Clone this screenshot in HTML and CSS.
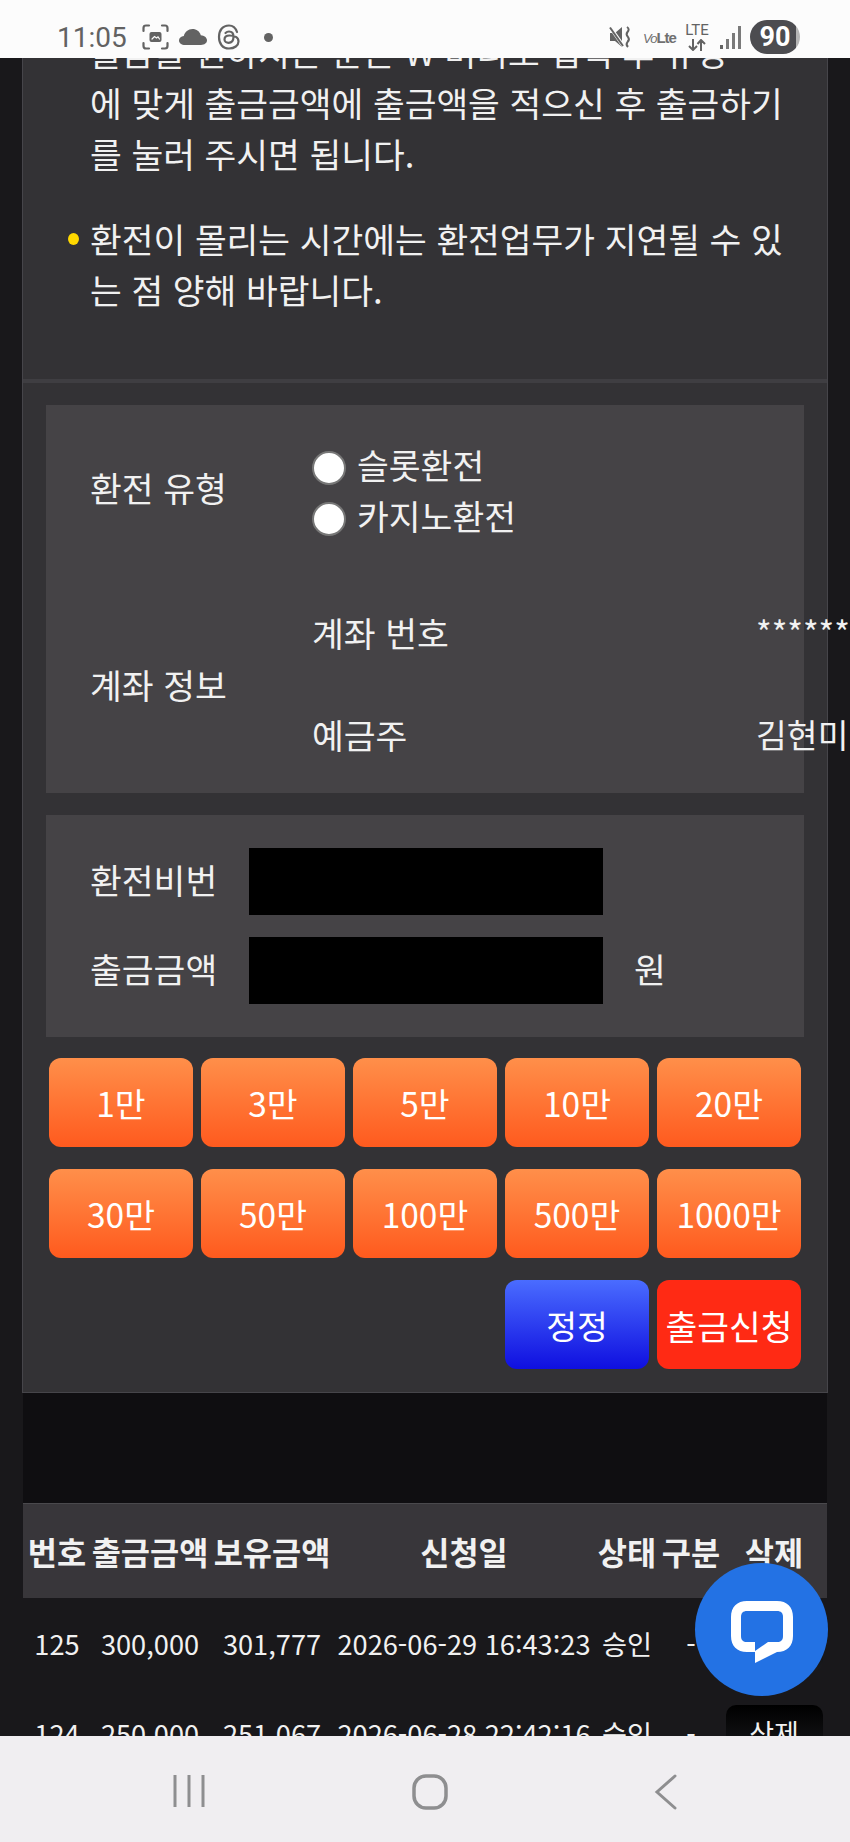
FILE: index.html
```html
<!DOCTYPE html>
<html lang="ko">
<head>
  <meta charset="UTF-8">
  <meta name="viewport" content="width=device-width, initial-scale=1.0">
  <title>환전 신청</title>
  <link rel="stylesheet" href="styles.css">
</head>
<body>
  <div class="phone">
    <div class="statusbar">
      <span class="clock">11:05</span>
      <svg class="ic-shot" width="27" height="26" viewBox="0 0 27 26" fill="none" stroke="#636363" stroke-width="2.2" stroke-linecap="round">
        <path d="M1.5 7V4Q1.500 1.500 4 1.500H7M20 1.500H23Q25.500 1.500 25.500 4V7M25.500 19V22Q25.500 24.500 23 24.500H20M7 24.500H4Q1.500 24.500 1.500 22V19"/>
        <rect x="7.500" y="8" width="12" height="10" rx="2" fill="#636363" stroke="none"/>
        <path d="M10 15L12.500 12.500L14.500 14L16 12.800L17.500 15" stroke="#fcfcfc" stroke-width="1.200"/>
      </svg>
      <svg class="ic-cloud" width="28" height="16" viewBox="0 0 28 16"><path fill="#636363" d="M6 16C2.500 16 0 14 0 11.500C0 9 2 7.200 4.800 7C5.800 3 9.200 0 13.500 0C17.500 0 20.800 2.500 21.800 6.200C25.200 6.500 28 8.500 28 11.300C28 14 25.500 16 22 16Z"/></svg>
      <svg class="ic-threads" width="24" height="26" viewBox="0 0 24 26" fill="none" stroke="#636363" stroke-width="2.200" stroke-linecap="round">
        <path d="M20 8C18.500 3.500 15.500 1.500 12 1.500C5.500 1.500 2 6.500 2 13C2 19.500 5.500 24.500 12 24.500C17.500 24.500 21.500 21.500 21.500 17.500C21.500 13.500 17.500 11.500 12.500 11.500C9 11.500 7.500 13.500 7.500 15.500C7.500 17.500 9.500 18.800 11.500 18.800C14.500 18.800 16.500 16.500 16.500 12.500C16.500 9 14.500 7.500 12 7.500C10.500 7.500 9.500 8 8.500 9"/>
      </svg>
      <span class="dot"></span>
      <div class="status-right">
        <svg class="ic-mute" width="23" height="24" viewBox="0 0 23 24" fill="none">
          <path fill="#636363" d="M1 8H6L13 2V22L6 16H1Z"/>
          <path d="M1 2L15 22" stroke="#fcfcfc" stroke-width="3.500"/>
          <path d="M1 2.500L14 21" stroke="#636363" stroke-width="2"/>
          <path d="M18 2Q21 4 18.500 7Q16.500 9.500 19 12Q21 14.500 18.500 17Q16.500 19.500 19 22" stroke="#636363" stroke-width="2"/>
        </svg>
        <span class="volte"><i>Vo</i><b>Lte</b></span>
        <span class="lte">
          <span class="lte-txt">LTE</span>
          <svg width="20" height="12" viewBox="0 0 20 12" fill="none" stroke="#636363" stroke-width="2">
            <path d="M6 0V11M2 7L6 11L10 7M14 12V1M10.500 5L14 1L18 5"/>
          </svg>
        </span>
        <svg class="ic-signal" width="22" height="24" viewBox="0 0 22 24" fill="#636363">
          <rect x="0" y="20" width="3" height="4"/>
          <rect x="6" y="14" width="3" height="10" opacity=".85"/>
          <rect x="12" y="8" width="3" height="16" opacity=".85"/>
          <rect x="18" y="1" width="3" height="23" opacity=".85"/>
        </svg>
        <span class="battery">90</span>
      </div>
    </div>

    <div class="content">
      <div class="column">
        <div class="panel">
          <ul class="notice">
            <li><span>출금을 원하시는 분은 W 머니로 입력 후 규정<br>에 맞게 출금금액에 출금액을 적으신 후 출금하기<br>를 눌러 주시면 됩니다.</span></li>
            <li><span>환전이 몰리는 시간에는 환전업무가 지연될 수 있는 점 양해 바랍니다.</span></li>
          </ul>

          <div class="form-area">
            <div class="card card-info">
              <div class="info-row info-type">
                <div class="info-label">환전 유형</div>
                <div class="radios">
                  <label class="radio"><input type="radio" name="kind"><span>슬롯환전</span></label>
                  <label class="radio"><input type="radio" name="kind"><span>카지노환전</span></label>
                </div>
              </div>
              <div class="info-row">
                <div class="info-label info-label-account">계좌 정보</div>
                <div class="account">
                  <div class="account-row"><span class="account-key">계좌 번호</span><span class="account-val">******</span></div>
                  <div class="account-row"><span class="account-key">예금주</span><span class="account-val">김현미</span></div>
                </div>
              </div>
            </div>

            <div class="card card-input">
              <div class="input-row">
                <label class="input-label">환전비번</label>
                <input class="black-input" type="password">
              </div>
              <div class="input-row">
                <label class="input-label">출금금액</label>
                <input class="black-input" type="text">
                <span class="unit">원</span>
              </div>
            </div>

            <div class="amounts">
              <button class="btn btn-orange">1만</button>
              <button class="btn btn-orange">3만</button>
              <button class="btn btn-orange">5만</button>
              <button class="btn btn-orange">10만</button>
              <button class="btn btn-orange">20만</button>
              <button class="btn btn-orange">30만</button>
              <button class="btn btn-orange">50만</button>
              <button class="btn btn-orange">100만</button>
              <button class="btn btn-orange">500만</button>
              <button class="btn btn-orange">1000만</button>
              <button class="btn btn-blue">정정</button>
              <button class="btn btn-red">출금신청</button>
            </div>
          </div>
        </div>

        <table class="history">
          <colgroup>
            <col class="c-no"><col class="c-amount"><col class="c-hold"><col class="c-date"><col class="c-state"><col class="c-kind"><col class="c-del">
          </colgroup>
          <thead>
            <tr><th>번호</th><th>출금금액</th><th>보유금액</th><th>신청일</th><th>상태</th><th>구분</th><th>삭제</th></tr>
          </thead>
          <tbody>
            <tr><td>125</td><td>300,000</td><td>301,777</td><td>2026-06-29 16:43:23</td><td>승인</td><td>-</td><td><button class="del">삭제</button></td></tr>
            <tr><td>124</td><td>250,000</td><td>251,067</td><td>2026-06-28 22:42:16</td><td>승인</td><td>-</td><td><button class="del">삭제</button></td></tr>
          </tbody>
        </table>
      </div>
    </div>

    <div class="navbar">
      <svg width="34" height="34" viewBox="0 0 34 34" stroke="#8e8e90" stroke-width="3" fill="none"><path d="M3 1V33M17 1V33M31 1V33"/></svg>
      <svg width="36" height="36" viewBox="0 0 36 36" stroke="#8e8e90" stroke-width="3.500" fill="none"><rect x="2" y="2" width="32" height="32" rx="12"/></svg>
      <svg width="24" height="36" viewBox="0 0 24 36" stroke="#8e8e90" stroke-width="3" fill="none" stroke-linecap="round"><path d="M21 2L3 18L21 34"/></svg>
    </div>

    <div class="chat">
      <svg width="62" height="62" viewBox="0 0 62 62">
        <path fill="#fff" d="M16 0H46C56 0 62 6 62 16V35C62 45 56 51 46 51L24 62V51H16C6 51 0 45 0 35V16C0 6 6 0 16 0Z"/>
        <path fill="#2372e4" d="M16 10H46C50 10 52 12 52 16V35C52 39 50 41 46 41H37L24 50V41H16C12 41 10 39 10 35V16C10 12 12 10 16 10Z"/>
      </svg>
    </div>
  </div>
</body>
</html>
```

FILE: styles.css
```css
* {
  box-sizing: border-box;
}

body {
  margin: 0;
  font-family: "Noto Sans CJK KR", sans-serif;
  color: #f1f1f1;
  background-color: #19181b;
}

.phone {
  position: relative;
  width: 850px;
  height: 1842px;
  display: flex;
  flex-direction: column;
  overflow: hidden;
}

/* status bar */
.statusbar {
  height: 58px;
  flex: none;
  display: flex;
  align-items: center;
  padding: 16px 50px 0 57px;
  background-color: #fcfcfc;
}

.clock {
  font-family: Roboto, sans-serif;
  font-size: 28px;
  color: #626262;
  margin-right: 15px;
}

.ic-cloud {
  margin-left: 10px;
}

.ic-threads {
  margin-left: 10px;
}

.dot {
  width: 9px;
  height: 9px;
  margin-left: 23px;
  border-radius: 50%;
  background-color: #636363;
}

.status-right {
  margin-left: auto;
  display: flex;
  align-items: center;
}

.volte {
  width: 34px;
  margin-left: 11px;
  font-family: "Liberation Sans", sans-serif;
  font-size: 15px;
  letter-spacing: -1px;
  color: #707070;
  white-space: nowrap;
}

.volte i {
  font-size: 13px;
  font-weight: normal;
}

.lte {
  width: 26px;
  margin-left: 7px;
  display: flex;
  flex-direction: column;
  align-items: center;
  gap: 2px;
}

.lte-txt {
  font-family: Roboto, sans-serif;
  font-size: 15px;
  line-height: 13px;
  color: #636363;
}

.ic-signal {
  margin-left: 10px;
}

.battery {
  width: 50px;
  height: 34px;
  margin-left: 8px;
  border-radius: 17px;
  background: linear-gradient(90deg, #4c4c50 92%, #b5b5b5 92%);
  color: #fff;
  font-family: Roboto, sans-serif;
  font-weight: 700;
  font-size: 27px;
  line-height: 34px;
  text-align: center;
}

/* page */
.content {
  flex: 1;
  min-height: 0;
  overflow: hidden;
}

.column {
  width: 804px;
  height: 100%;
  margin-left: 23px;
  background-color: #0f0e11;
}

.panel {
  background-color: #333235;
  box-shadow: 0 0 0 1px #46454a;
}

.notice {
  list-style: none;
  margin: -32px 0 0;
  padding: 0 30px 64px 45px;
  border-bottom: 4px solid #3f3e42;
  font-size: 34.500px;
  line-height: 51px;
}

.notice li {
  display: flex;
  margin-bottom: 34px;
}

.notice li:last-child {
  margin-bottom: 0;
}

.notice li::before {
  content: "";
  flex: none;
  width: 11px;
  height: 12px;
  margin: 20px 11px 0 0;
  border-radius: 50%;
  background-color: #ffd800;
}

.form-area {
  padding: 22px 23px 23px;
}

.card {
  background-color: #454346;
  font-size: 34.600px;
}

.card-info {
  padding: 37px 0 6px;
  margin-bottom: 22px;
}

.info-row {
  display: flex;
  align-items: center;
}

.info-type {
  margin-bottom: 39px;
}

.info-label {
  width: 266px;
  padding: 0 0 12px 44px;
  flex: none;
}

.info-label-account {
  padding-bottom: 2px;
}

.radio {
  height: 51px;
  display: flex;
  align-items: center;
  gap: 11px;
}

.radio span {
  padding-bottom: 8px;
}

.radio input {
  appearance: none;
  width: 34px;
  height: 34px;
  margin: 0;
  border: 2px solid #777;
  border-radius: 50%;
  background-color: #fff;
}

.account-row {
  height: 102px;
  display: flex;
  align-items: center;
  white-space: nowrap;
}

.account-key {
  width: 444px;
  padding-bottom: 4px;
}

.account-val {
  padding-bottom: 6px;
  font-size: 33.500px;
}

.card-input {
  padding: 33px 0 33px 44px;
  margin-bottom: 21px;
}

.input-row {
  display: flex;
  align-items: center;
  margin-bottom: 22px;
}

.input-row:last-child {
  margin-bottom: 0;
}

.input-label {
  width: 159px;
  padding-bottom: 6px;
}

.black-input {
  width: 354px;
  height: 67px;
  border: none;
  border-radius: 0;
  background-color: #000;
}

.unit {
  margin-left: 31px;
  padding-bottom: 6px;
}

.amounts {
  display: grid;
  grid-template-columns: repeat(5, 144px);
  grid-auto-rows: 89px;
  gap: 22px 8px;
  padding-left: 3px;
}

.btn {
  border: none;
  border-radius: 12px;
  padding: 0;
  color: #fff;
  font-family: inherit;
  font-size: 33.500px;
  white-space: nowrap;
}

.btn-orange {
  background: linear-gradient(#ff8f4a, #ff5a1e);
}

.btn-blue {
  grid-column: 4;
  background: linear-gradient(#4a6cff, #0f0fe0);
}

.btn-red {
  background-color: #ff2a14;
  font-size: 34.500px;
}

/* history table */
.history {
  width: 804px;
  margin-top: 111px;
  border-collapse: collapse;
  table-layout: fixed;
  background-color: #19181b;
}

.c-no { width: 68px; }
.c-amount { width: 118px; }
.c-hold { width: 126px; }
.c-date { width: 258px; }
.c-state { width: 68px; }
.c-kind { width: 60px; }
.c-del { width: 106px; }

.history th {
  height: 94px;
  padding: 0;
  background-color: #38363a;
  border-top: 1px solid #4a494d;
  font-size: 31.700px;
  font-weight: 700;
  white-space: nowrap;
}

.history td {
  height: 90px;
  padding: 0;
  text-align: center;
  font-size: 27.200px;
  white-space: nowrap;
}

.del {
  width: 97px;
  height: 56px;
  border: none;
  border-radius: 10px;
  background: linear-gradient(#000, #1c1c1f);
  color: #f1f1f1;
  font-family: inherit;
  font-size: 27px;
}

/* android nav bar */
.navbar {
  height: 106px;
  flex: none;
  display: flex;
  align-items: flex-start;
  padding: 38px 172px 0 172px;
  justify-content: space-between;
  background-color: #f0eef1;
}

/* chat launcher */
.chat {
  position: absolute;
  right: 22px;
  bottom: 146px;
  width: 133px;
  height: 133px;
  padding-top: 4px;
  border-radius: 50%;
  background-color: #2372e4;
  display: flex;
  align-items: center;
  justify-content: center;
}
```
